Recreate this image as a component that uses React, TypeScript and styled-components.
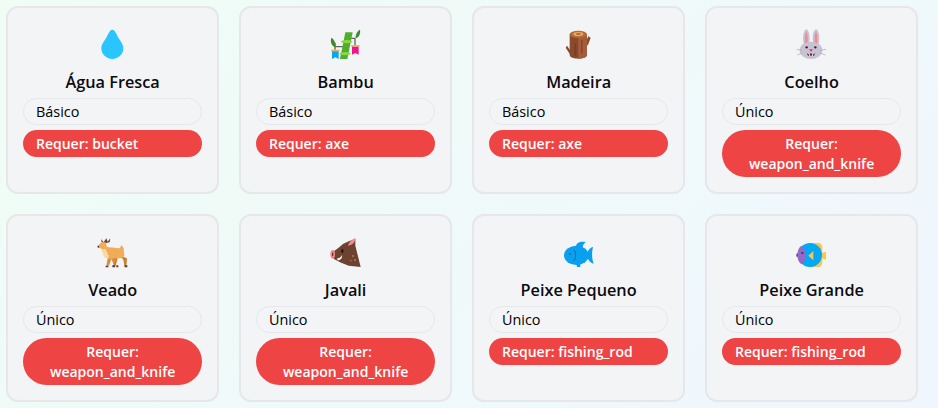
import React from 'react';
import styled, { createGlobalStyle } from 'styled-components';

const GlobalStyle = createGlobalStyle`
  html, body {
    margin: 0;
    padding: 0;
    height: 100%;
    overflow: hidden;
    background: linear-gradient(135deg, #f0fdf4, #eff6ff);
    font-family: "Open Sans", "Noto Sans", sans-serif;
  }
`;

const Grid = styled.div`
  display: grid;
  grid-template-columns: repeat(4, 213.3px);
  gap: 20px 19.7px;
  padding: 6px 0 6px 6px;
`;

const Card = styled.div`
  display: flex;
  flex-direction: column;
  align-items: center;
  min-height: 188px;
  box-sizing: border-box;
  padding: 16px 15px 15px;
  background: #f3f4f6;
  border: 2px solid #e5e7eb;
  border-radius: 12px;
`;

const IconBox = styled.svg`
  display: block;
  width: 40px;
  height: 40px;
  margin-top: 1px;
`;

const Name = styled.h3`
  margin: 5px 0 4px;
  font-size: 16.3px;
  line-height: 24px;
  font-weight: 600;
  color: #0b0b0f;
`;

const Pill = styled.div`
  display: flex;
  align-items: center;
  align-self: stretch;
  box-sizing: border-box;
  min-height: 27px;
  border-radius: 9999px;
  font-size: 14px;
  line-height: 20px;
  text-align: center;
`;

const TierPill = styled(Pill)`
  padding: 2.5px 12px;
  border: 1px solid #e5e7eb;
  color: #000;
  font-size: 14.4px;
  font-weight: 500;
`;

const RequirePill = styled(Pill)`
  margin-top: 5px;
  padding: 3.5px 13px;
  background: #ef4444;
  color: #fff;
  font-weight: 600;
`;

const Drop = () => (
  <path d="M96 44C103 44 107 54 113 66C120 78 129 88 129 100C129 118 114 132 96 132C78 132 63 118 63 100C63 88 72 78 79 66C85 54 89 44 96 44Z" fill="#29c5ff" />
);

const Bamboo = () => (
  <>
    <path d="M75 84V108M135 68V92M76 95H102M112 70H136" stroke="#5f6b62" strokeWidth="4" fill="none" />
    <path d="M76 97C64 92 60 80 64 68C74 74 78 86 76 97Z" fill="#3f8a2e" />
    <path d="M137 70C136 58 142 48 150 44C152 56 148 66 137 70Z" fill="#3f8a2e" />
    <path d="M106 52H128L112 132H90Z" fill="#4fae2f" />
    <ellipse cx="110" cy="80" rx="17" ry="5" fill="#8fd63f" />
    <ellipse cx="105" cy="116" rx="17" ry="5" fill="#8fd63f" />
    <path d="M66 108H86V132L76 127L66 132Z" fill="#08a8f0" />
    <path d="M126 94H146V119L136 114L126 119Z" fill="#f0148c" />
    <rect x="63" y="104" width="26" height="5" fill="#f4b55a" />
    <rect x="123" y="90" width="26" height="5" fill="#f4b55a" />
  </>
);

const Log = () => (
  <>
    <path d="M122 82L130 64L137 68L128 92ZM80 112L66 92L62 98L78 122Z" fill="#8a4a2c" />
    <path d="M74 58H126V120C126 127 114 131 100 131C86 131 74 127 74 120Z" fill="#8a4a2c" />
    <path d="M100 60H126V120C126 125 114 131 100 131Z" fill="#a55c3b" />
    <path d="M88 85H94V122H88ZM108 75H113V115H108Z" fill="#71381f" opacity=".6" />
    <ellipse cx="100" cy="58" rx="26" ry="11" fill="#b46a38" />
    <ellipse cx="100" cy="57" rx="15" ry="6" fill="#e9ad62" />
    <ellipse cx="100" cy="57" rx="8" ry="3" fill="#b46a38" />
  </>
);

const Rabbit = () => (
  <>
    <ellipse cx="81" cy="70" rx="10" ry="27" fill="#c9c2d3" />
    <ellipse cx="110" cy="70" rx="10" ry="27" fill="#c9c2d3" />
    <ellipse cx="81" cy="72" rx="4" ry="20" fill="#f08b8f" />
    <ellipse cx="110" cy="72" rx="4" ry="20" fill="#f08b8f" />
    <ellipse cx="95" cy="106" rx="34" ry="26" fill="#c9c2d3" />
    <circle cx="82" cy="97" r="3.5" fill="#2b2730" />
    <circle cx="108" cy="97" r="3.5" fill="#2b2730" />
    <path d="M89 103H101L95 110Z" fill="#e8336d" />
    <path d="M82 113C87 120 92 120 95 113C98 120 103 120 108 113L104 122H86Z" fill="#2b2730" />
    <path d="M91 118V123M99 118V123" stroke="#fff" strokeWidth="3" />
    <path d="M68 106L52 103M68 114L54 120M122 106L140 103M122 114L138 120" stroke="#a8a2b3" strokeWidth="2" />
  </>
);

const Deer = () => (
  <>
    <path d="M62 42L70 52L78 40L82 50L90 40L88 52L74 55L64 52Z" fill="#6b4037" />
    <path d="M98 98L112 98L106 124H100ZM122 92L140 100L138 124H132L130 108Z" fill="#c9812f" />
    <path d="M82 100H94L86 122H78ZM92 100H108L100 118Z" fill="#d98f3a" />
    <path d="M52 62L64 52L76 52L80 66L118 70L124 60L130 70L132 92L124 100L90 100L72 96L66 72L54 68Z" fill="#f2ac58" />
    <path d="M62 72L76 72L86 96L72 96Z" fill="#fbd9a0" />
    <circle cx="54" cy="65" r="2.5" fill="#3b2a25" />
    <path d="M76 122H84V127H76ZM96 121H104V127H96ZM108 121H114V127H108ZM133 121H141V127H133Z" fill="#5c3a30" />
  </>
);

const Boar = () => (
  <>
    <path d="M64 84L84 70L100 56L118 48L136 42L136 62L152 126L116 122L90 112L72 102Z" fill="#6e4231" />
    <path d="M114 62C118 48 128 42 137 39C135 50 130 60 114 62Z" fill="#f08b8f" />
    <ellipse cx="68" cy="88" rx="7" ry="13" fill="#f08b8f" />
    <ellipse cx="68" cy="88" rx="2" ry="6" fill="#5c2f2a" />
    <ellipse cx="97" cy="78" rx="3.5" ry="6" fill="#1d1513" />
    <path d="M80 101C88 101 94 96 96 90C98 98 92 106 84 106Z" fill="#fff" />
    <path d="M126 90h6v6h-6zM132 102h6v6h-6zM120 104h5v5h-5z" fill="#a66a4d" />
  </>
);

const SmallFish = () => (
  <>
    <path d="M92 66C94 52 106 48 122 51C114 58 112 64 114 72Z" fill="#0aa0f0" />
    <path d="M94 116H106V126H96Z" fill="#0aa0f0" />
    <path d="M124 90C128 78 134 68 144 66C140 80 140 100 146 116C134 114 128 102 124 90Z" fill="#0aa0f0" />
    <ellipse cx="94" cy="91" rx="37" ry="29" fill="#0aa0f0" />
    <path d="M86 74C94 82 94 98 86 108" stroke="#0a5f9e" strokeWidth="2.5" fill="none" />
    <circle cx="75" cy="87" r="2.5" fill="#0a3c66" />
  </>
);

const BigFish = () => (
  <>
    <path d="M128 84L140 80V104L128 100Z" fill="#fdc54a" />
    <path d="M92 54H118C126 54 129 62 129 70V110C129 120 124 126 116 126H92Z" fill="#fdc54a" />
    <circle cx="92" cy="90" r="36" fill="#03a9f4" />
    <path d="M66 62C74 68 79 78 79 90C79 102 74 112 66 118C58 112 54 102 54 90C54 78 58 68 66 62Z" fill="#9468c6" />
    <rect x="66" y="81" width="6" height="6" fill="#4b3a6b" />
    <rect x="51" y="86" width="5" height="9" fill="#5d5570" />
    <path d="M87 92L102 78V106Z" fill="#fdc54a" />
  </>
);

const items = [
  { name: 'Água Fresca', tier: 'Básico', tool: 'bucket', box: '38 30', Art: Drop },
  { name: 'Bambu', tier: 'Básico', tool: 'axe', box: '48 30', Art: Bamboo },
  { name: 'Madeira', tier: 'Básico', tool: 'axe', box: '42 30', Art: Log },
  { name: 'Coelho', tier: 'Único', tool: 'weapon_and_knife', box: '38 30', Art: Rabbit },
  { name: 'Veado', tier: 'Único', tool: 'weapon_and_knife', box: '38 24', Art: Deer },
  { name: 'Javali', tier: 'Único', tool: 'weapon_and_knife', box: '48 24', Art: Boar },
  { name: 'Peixe Pequeno', tier: 'Único', tool: 'fishing_rod', box: '42 24', Art: SmallFish },
  { name: 'Peixe Grande', tier: 'Único', tool: 'fishing_rod', box: '38 24', Art: BigFish },
];

export default function App() {
  return (
    <>
      <GlobalStyle />
      <Grid>
        {items.map(({ name, tier, tool, box, Art }) => (
          <Card key={name}>
            <IconBox viewBox={`${box} 120 120`}>
              <Art />
            </IconBox>
            <Name>{name}</Name>
            <TierPill>{tier}</TierPill>
            <RequirePill>Requer: {tool}</RequirePill>
          </Card>
        ))}
      </Grid>
    </>
  );
}
